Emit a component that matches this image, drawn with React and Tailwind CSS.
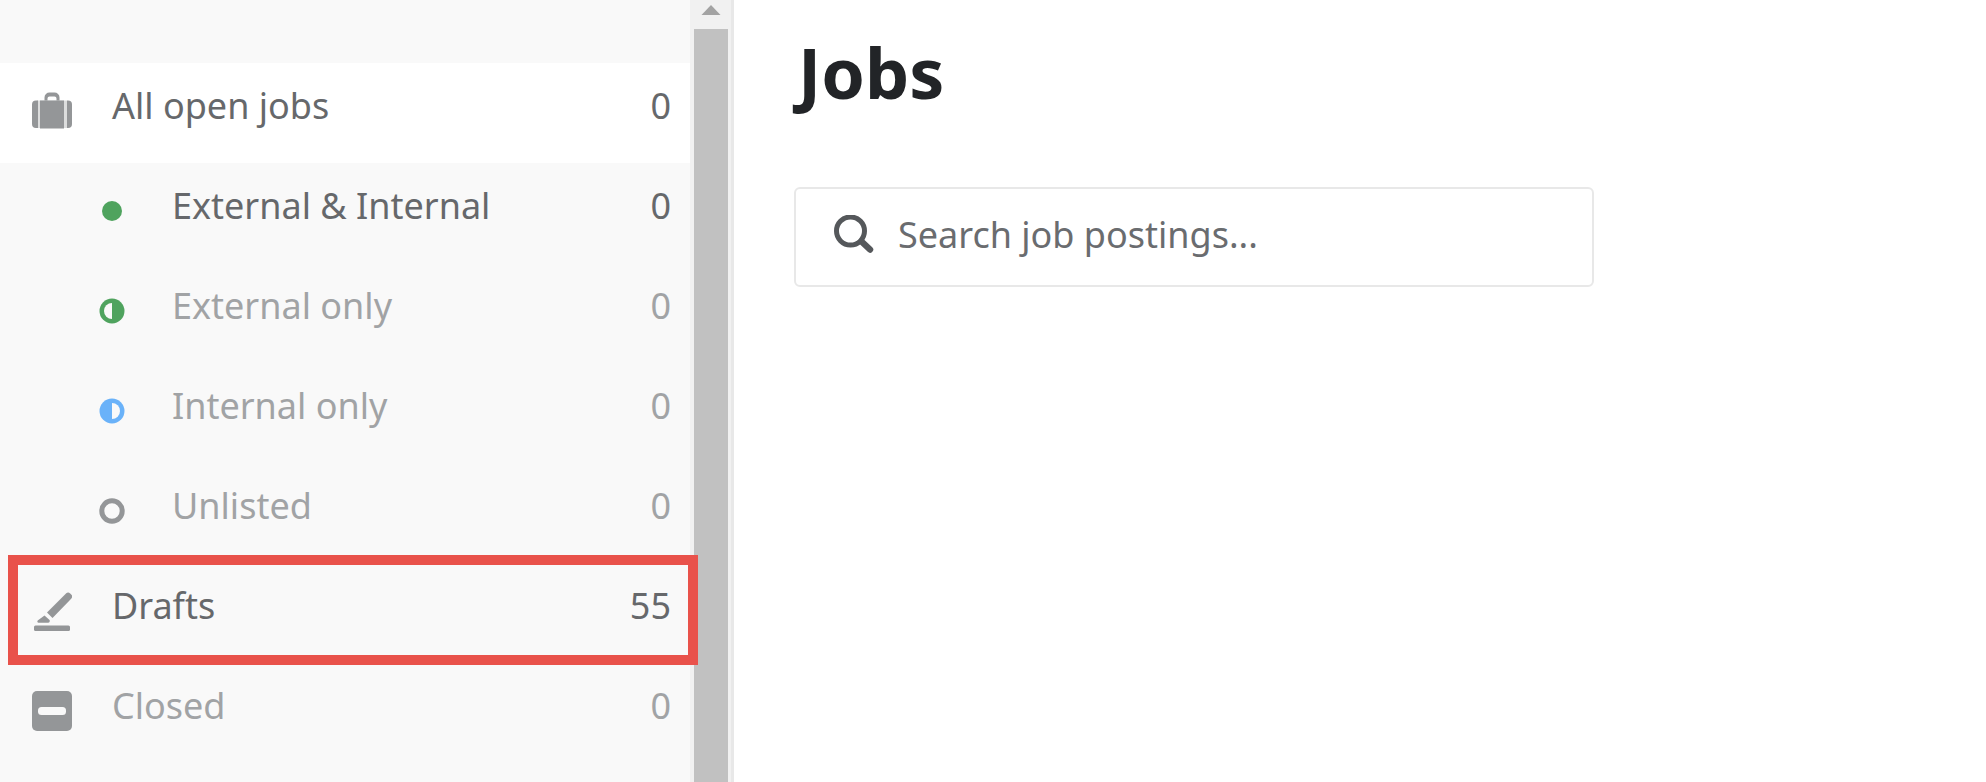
import React from "react";

const BriefcaseIcon = () => (
  <svg width="40" height="40" viewBox="0 0 40 40" fill="#949698" aria-hidden="true">
    <path d="M12.500 10V6.500a5 5 0 0 1 5-5h5a5 5 0 0 1 5 5V10h-3V7.500a2 2 0 0 0-2-2h-5a2 2 0 0 0-2 2V10z" />
    <rect x="5" y="9.500" width="30" height="27.500" fill="#dcdddd" />
    <rect x="8" y="9.500" width="24" height="28" />
    <path d="M6 9.500v27.500H4a4 4 0 0 1-4-4V13.500a4 4 0 0 1 4-4z" />
    <path d="M35 9.500v27.500h1a4 4 0 0 0 4-4V13.500a4 4 0 0 0-4-4z" />
  </svg>
);

const PencilIcon = () => (
  <svg width="40" height="40" viewBox="0 0 40 40" fill="#949698" aria-hidden="true">
    <path d="M15 21.500 34 2.500a3 3 0 0 1 4.200 0l1 1a3 3 0 0 1 0 4.200L20.500 27z" />
    <path d="M12.500 24.500 17 28.500a1.800 1.800 0 0 1-1 3.300H6.500a1.300 1.300 0 0 1-.8-2.200z" />
    <rect x="2" y="34.500" width="36" height="5.500" rx="1.500" />
  </svg>
);

const MinusIcon = () => (
  <svg width="40" height="40" viewBox="0 0 40 40" aria-hidden="true">
    <rect width="40" height="40" rx="5" fill="#949698" />
    <rect x="6" y="16" width="28" height="8" rx="3.500" fill="#f9f9f9" />
  </svg>
);

const FullDot = () => (
  <svg width="26" height="26" viewBox="0 0 26 26" aria-hidden="true">
    <circle cx="13" cy="13" r="10" fill="#4fa35e" />
  </svg>
);

const ExternalDot = () => (
  <svg width="26" height="26" viewBox="0 0 26 26" aria-hidden="true">
    <circle cx="13" cy="13" r="12.500" fill="#4fa35e" />
    <path d="M13 5a8 8 0 0 0 0 16z" fill="#f9f9f9" />
  </svg>
);

const InternalDot = () => (
  <svg width="26" height="26" viewBox="0 0 26 26" aria-hidden="true">
    <circle cx="13" cy="13" r="12.500" fill="#6ab2f9" />
    <path d="M13 5a8 8 0 0 1 0 16z" fill="#f9f9f9" />
  </svg>
);

const RingDot = () => (
  <svg width="26" height="26" viewBox="0 0 26 26" aria-hidden="true">
    <circle cx="13" cy="13" r="10.200" fill="none" stroke="#949698" strokeWidth="5" />
  </svg>
);

const SearchIcon = () => (
  <svg width="40" height="40" viewBox="0 0 40 40" fill="none" stroke="#55585b" aria-hidden="true">
    <circle cx="16.500" cy="16" r="14" strokeWidth="5" />
    <path d="m27.500 26.500 8.500 8" strokeWidth="6.500" strokeLinecap="round" />
  </svg>
);

const filters = [
  { label: "All open jobs", count: 0, icon: BriefcaseIcon, active: true },
  { label: "External & Internal", count: 0, icon: FullDot, nested: true },
  { label: "External only", count: 0, icon: ExternalDot, nested: true, muted: true },
  { label: "Internal only", count: 0, icon: InternalDot, nested: true, muted: true },
  { label: "Unlisted", count: 0, icon: RingDot, nested: true, muted: true },
  { label: "Drafts", count: 55, icon: PencilIcon, highlighted: true },
  { label: "Closed", count: 0, icon: MinusIcon, muted: true },
];

const FilterRow = ({ item }) => (
  <li className={item.active ? "relative bg-white" : "relative"}>
    <a
      href="#"
      className={`flex h-[100px] items-center pr-[19px] pb-1 ${item.nested ? "pl-[99px]" : "pl-8"} ${
        item.muted ? "text-[#a1a3a5]" : "text-[#66686b]"
      }`}
    >
      <span className={item.nested ? "w-[73px] shrink-0" : "w-20 shrink-0"}>
        <item.icon />
      </span>
      <span className="flex-1 pb-2.5">{item.label}</span>
      <span className="pb-2.5">{item.count}</span>
    </a>
    {item.highlighted && (
      <div className="pointer-events-none absolute -top-2 -right-2 -bottom-0.5 left-2 z-10 border-10 border-[#e9524b]" />
    )}
  </li>
);

const App = () => {
  return (
    <div className="flex h-screen overflow-hidden bg-white font-['Noto_Sans',sans-serif] text-[36px] leading-[48px]">
      {/* Sidebar */}
      <aside className="flex w-[734px] shrink-0 border-r-3 border-[#e8e8e8] bg-[#f9f9f9]">
        <nav aria-label="Job filters" className="flex-1 pt-[63px]">
          <ul>
            {filters.map((item) => (
              <FilterRow key={item.label} item={item} />
            ))}
          </ul>
        </nav>

        {/* Scrollbar */}
        <div className="flex w-[41px] flex-col bg-[#f1f1f1] pr-[3px] pl-1" aria-hidden="true">
          <div className="flex h-[29px] shrink-0 justify-center pt-1">
            <svg width="20" height="12" viewBox="0 0 20 12" fill="#a3a3a3">
              <path d="M10 1 19.500 11H.500z" />
            </svg>
          </div>
          <div className="flex-1 bg-[#c1c1c1]" />
        </div>
      </aside>

      {/* Content */}
      <main className="min-w-0 flex-1 px-[60px] pt-[30px]">
        <h1 className="pl-1 text-[70px] leading-[84px] font-bold text-[#222427]">Jobs</h1>
        <label className="mt-[73px] flex h-[100px] w-full max-w-[800px] items-center gap-6 rounded-md border-2 border-[#e8e8e8] pr-6 pb-1 pl-[38px]">
          <SearchIcon />
          <input
            type="text"
            aria-label="Search job postings"
            placeholder="Search job postings..."
            className="min-w-0 flex-1 bg-transparent outline-none placeholder:text-[#6a6c6f]"
          />
        </label>
      </main>
    </div>
  );
};

export default App;
